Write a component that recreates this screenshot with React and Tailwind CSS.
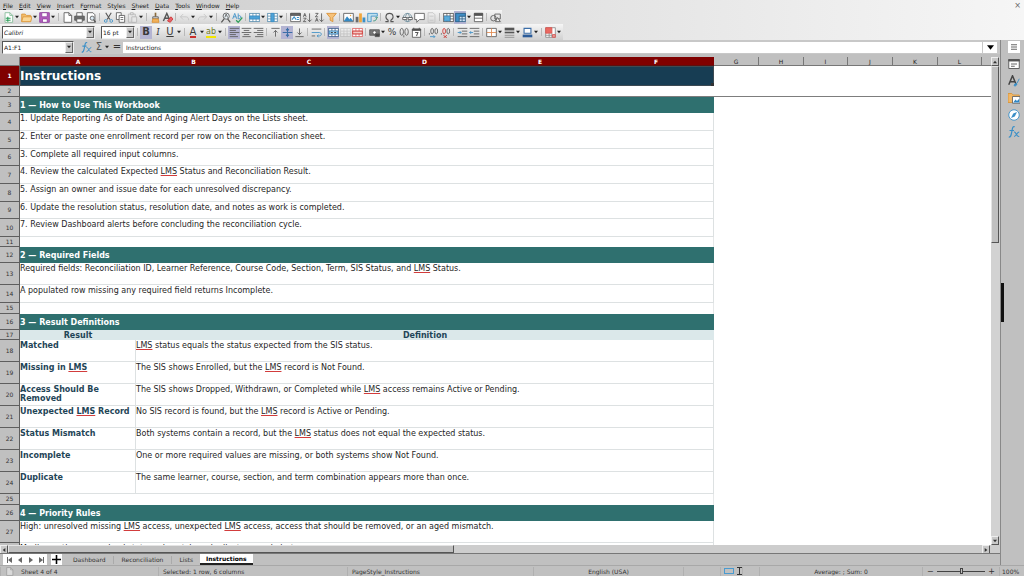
import React from 'react';

const INK = '#565656';
const BLUE = '#3a8fc7';
const RED = '#c9302c';

const Svg = ({ children, className = 'w-[11px] h-[11px]' }) => (
  <svg viewBox="0 0 16 16" className={className} fill="none" stroke={INK} strokeWidth="1.2">
    {children}
  </svg>
);

const Grid = ({ x = 1, y = 2, w = 14, h = 12, color = INK, fill = '#fff' }) => (
  <>
    <rect x={x} y={y} width={w} height={h} fill={fill} stroke={color} />
    <path d={`M${x} ${y + h / 3}h${w}M${x} ${y + (2 * h) / 3}h${w}M${x + w / 3} ${y}v${h}M${x + (2 * w) / 3} ${y}v${h}`} stroke={color} />
  </>
);

const ICONS = {
  new: <><path d="M3 1h7l4 4v10H3z" fill="#fff" stroke="#7fb894" /><path d="M10 1v4h4" stroke="#7fb894" /><path d="M4 9h7M4 12h7M7 7v7" stroke="#2f9e5b" strokeWidth="1.6" /></>,
  open: <><path d="M1 3h5l2 2h6v9H1z" fill="#f3bd6b" stroke="#d9953a" /><path d="M3 7h13l-2 7H1z" fill="#fbd795" stroke="#d9953a" /></>,
  save: <><path d="M1 1h14v14H1z" fill="#b55fc0" stroke="#8d3f9b" /><path d="M4 1h8v6H4zM5 10h7v5H5z" fill="#fff" stroke="#8d3f9b" /></>,
  page: <><path d="M3 1h7l4 4v10H3z" fill="#fff" /><path d="M10 1v4h4" /></>,
  print: <><path d="M4 6V1h8v5" fill="#fff" /><path d="M1 6h14v6H1z" fill="#6b6b6b" /><path d="M4 10h8v5H4z" fill="#fff" /></>,
  preview: <><path d="M2 1h8l3 3v11H2z" fill="#fff" /><circle cx="9" cy="9" r="3" fill="#dceaf4" /><path d="M11 11l3 4" strokeWidth="2" /></>,
  cut: <><path d="M4 1l6 10M12 1L6 11" strokeWidth="1.6" /><circle cx="4" cy="13" r="2" stroke={BLUE} /><circle cx="12" cy="13" r="2" stroke={BLUE} /></>,
  copy: <><path d="M2 1h7v10H2z" fill="#fff" /><path d="M6 5h8v10H6z" fill="#fff" /><path d="M8 8h4M8 11h4" /></>,
  paste: <g stroke="#b5b5b5"><path d="M2 3h10v12H2z" /><path d="M5 1h4v3H5zM7 7h7v8H7z" fill="#e6e6e6" /></g>,
  brush: <><path d="M8 1v6" stroke="#8a6b3c" strokeWidth="2.4" /><path d="M4 7h8v3H4z" fill="#ddd" /><path d="M4 10h8l1 5H3z" fill="#f2b25c" stroke="#d98e2f" /></>,
  clear: <><path d="M2 13L7 2l5 11M4 9h6" strokeWidth="2" /><path d="M8 13l5-6 3 3-4 5z" fill="#e8606a" stroke={RED} /></>,
  undo: <path d="M6 3L2 7l4 4M2 7h8c3 0 4 2 4 5" stroke="#c4c4c4" />,
  redo: <path d="M10 3l4 4-4 4M14 7H6c-3 0-4 2-4 5" stroke="#c4c4c4" />,
  find: <><circle cx="9" cy="6" r="4.5" fill="#eaf2f7" /><path d="M6 10l-4 5M11 10l4 5" strokeWidth="1.8" /><path d="M7 8l2-5 2 5" /></>,
  spell: <><path d="M1 10l3-8 3 8M2 7h4M9 2v8M9 6c4-3 6 4 0 4" stroke={BLUE} /><path d="M6 12l3 3 6-7" stroke="#2f9e5b" strokeWidth="1.8" /></>,
  row: <><Grid color="#5b8fb0" /><path d="M1 6h14v4H1z" fill="#4ca3d8" stroke={BLUE} /></>,
  column: <><Grid color="#5b8fb0" /><path d="M6 2h4v12H6z" fill="#4ca3d8" stroke={BLUE} /></>,
  sort: <><path d="M1 2h14v12H1z" fill="#fff" /><path d="M1 2h14v3H1z" fill="#666" /><path d="M3 11l3-4 3 4M10 8h3M10 11h3" stroke={BLUE} strokeWidth="1.6" /></>,
  sortAsc: <><path d="M2 7l2-5 2 5M3 5h2M2 9h4l-4 5h4" /><path d="M11 2v12M8 11l3 3 3-3" /></>,
  sortDesc: <><path d="M2 2h4L2 7h4M2 14l2-5 2 5M3 12h2" /><path d="M11 2v12M8 11l3 3 3-3" /></>,
  filter: <path d="M1 2h14L10 8v6l-4-2V8z" fill="#f6c27a" stroke="#d98e2f" />,
  image: <><path d="M1 2h14v12H1z" fill="#fff" /><path d="M2 13l4-6 3 4 2-2 3 4z" fill="#2f86c4" stroke={BLUE} /><circle cx="11" cy="5" r="1" fill="#f0a63b" stroke="none" /></>,
  chart: <><path d="M1 7h4v8H1z" fill="#6b6b6b" stroke="none" /><path d="M6 2h4v13H6z" fill="#f0a63b" stroke="none" /><path d="M11 8h4v7h-4z" fill="#3a8fc7" stroke="none" /></>,
  pivot: <><path d="M1 2h14v4H6v8H1z" fill="#bfe0ee" stroke={BLUE} /><path d="M9 13c4 0 5-2 5-5M12 9l2-2 2 2" stroke="#2f8f77" /></>,
  omega: <path d="M2 14h4v-2C1 9 2 2 8 2s7 7 2 10v2h4" strokeWidth="1.5" />,
  link: <><circle cx="8" cy="8" r="6" stroke="#6b8c9c" /><path d="M2 8h12M8 2c-4 4-4 8 0 12 4-4 4-8 0-12" stroke="#6b8c9c" /><path d="M1 8h6v3H1zM9 8h6v3H9z" fill="#fff" /></>,
  comment: <path d="M1 2h14v9H8l-4 4v-4H1z" fill="#fff" />,
  header: <g stroke="#c2c2c2"><path d="M3 1h7l3 3v11H3z" /><path d="M5 6h6M5 12h6" /></g>,
  printArea: <><Grid /><path d="M2 6h8v7H2z" fill="#59abd9" stroke={BLUE} /></>,
  freeze: <><Grid fill="#cfe3f2" color="#33658a" /><path d="M1 2h14v4H6v8H1z" fill="#3f8fc9" stroke="#33658a" /></>,
  split: <><path d="M2 2h12v12H2z" fill="#fff" /><path d="M2 2h12v3H2z" fill="#555" /><path d="M2 9h12" /></>,
  shapes: <><circle cx="5" cy="9" r="4" /><path d="M7 3h8v7H7z" /><path d="M8 14l3-6 4 6z" fill="#eee" /></>,
  top: <path d="M2 2h12M8 5v9M5 8l3-3 3 3" />,
  middle: <path d="M1 8h14M8 1v14M6 3l2 3 2-3M6 13l2-3 2 3" stroke="#3b6ea8" strokeWidth="1.5" />,
  bottom: <path d="M2 14h12M8 2v9M5 8l3 3 3-3" />,
  left: <path d="M1 2h14M1 5h9M1 8h14M1 11h9M1 14h12" />,
  center: <path d="M1 2h14M4 5h8M1 8h14M4 11h8M2 14h12" />,
  right: <path d="M1 2h14M6 5h9M1 8h14M6 11h9M3 14h12" />,
  wrap: <><path d="M1 3h14M1 13h5" /><path d="M1 8h11c4 0 4 5 0 5H9M11 11l-2 2 2 2" stroke={BLUE} /></>,
  merge: <><Grid color="#3c5f8a" /><path d="M2 6h12v4H2z" fill="#bfe0f5" stroke={BLUE} /><path d="M4 8h3M12 8H9" stroke="#222" /></>,
  unmerge: <g opacity=".2"><Grid /></g>,
  cells: <><Grid color="#d66" /><path d="M1 6h14v4H1z" fill="#f6c9c4" stroke={RED} /></>,
  currency: <><path d="M1 4h14v8H1z" fill="#777" /><circle cx="8" cy="8" r="2.5" fill="#fff" /><path d="M9 10h6v4H9z" fill="#444" /></>,
  number: <><ellipse cx="4" cy="7" rx="2.5" ry="5" /><ellipse cx="11" cy="7" rx="2.5" ry="5" /><path d="M7 12v3" /></>,
  date: <><path d="M2 3h12v12H2z" fill="#fff" /><path d="M2 3h12v2H2z" fill="#444" /><path d="M4 1v3M12 1v3M6 8h4l-2 5" strokeWidth="1.5" /></>,
  addDecimal: <><ellipse cx="6" cy="6" rx="2" ry="4" /><ellipse cx="12" cy="6" rx="2" ry="4" /><path d="M2 9v2" /><path d="M3 14h7M8 12l2 2-2 2" stroke={BLUE} /></>,
  delDecimal: <><ellipse cx="6" cy="6" rx="2" ry="4" stroke={RED} /><ellipse cx="12" cy="6" rx="2" ry="4" /><path d="M2 9v2" /><path d="M5 12l5 4M10 12l-5 4" stroke={RED} /></>,
  indent: <><path d="M1 2h14M7 6h8M7 10h8M1 14h14" /><path d="M1 8h5M4 6l2 2-2 2" stroke={BLUE} /></>,
  outdent: <><path d="M1 2h14M7 6h8M7 10h8M1 14h14" /><path d="M1 8h5M3 6L1 8l2 2" stroke={BLUE} /></>,
  borders: <><path d="M1 2h14v12H1z" fill="#fff" /><path d="M8 2v12M1 8h14" stroke="#e0874b" /></>,
  lineStyle: <><path d="M1 3h14" strokeWidth="4" /><path d="M1 8h14" strokeWidth="2.4" /><path d="M1 12h14M1 15h14" stroke="#888" /></>,
  lineColor: <><path d="M3 2h10v7H3z" fill="#fff" stroke="#3b6ea8" strokeWidth="1.6" /><path d="M1 13h14" stroke="#2c5c99" strokeWidth="4" /></>,
  conditional: <><path d="M1 1h14v14H1z" fill="#fff" stroke="#888" /><path d="M1 1h9v8H1z" fill="#ea6a62" stroke="#d9534f" /><path d="M1 12h14M6 9v6M10 9v6" stroke="#888" /><path d="M11 11h4v4h-4z" fill="#e9a09b" stroke="#d9534f" /></>,
};

const LETTERS = {
  bold: <span className="font-bold">B</span>,
  italic: <span className="italic font-serif">I</span>,
  underline: <span className="underline">U</span>,
  fontColor: <span className="border-b-2 border-[#c9302c] leading-[9px]">A</span>,
  highlight: <span className="border-b-2 border-[#f2e600] text-[8px] leading-[9px] text-[#6d7a2c]">ab</span>,
  percent: <span className="text-[9px]">%</span>,
};

// '|' is a separator, a trailing 'v' adds the drop-down arrow, '*' marks a pressed button
const STANDARD = 'new v open v save v | page print preview | cut copy paste v | brush clear | undo v redo v | find spell | row v column v | sort sortAsc sortDesc filter | image chart pivot | omega v link comment header | printArea *freeze v split | shapes';
const FORMATTING = '| *bold italic underline v | fontColor v highlight v | *left center right | top *middle bottom | wrap | *merge unmerge cells | currency v percent number date | addDecimal delDecimal | indent outdent | borders v lineStyle v lineColor v | conditional v';

const Arrow = () => (
  <svg viewBox="0 0 6 6" className="w-[4px] h-[4px]"><path d="M0 1h6L3 5z" fill="#222" /></svg>
);

const Tools = ({ list }) => list.split(' ').map((item, i) => {
  if (item === '|') return <span key={i} className="w-[5px] flex justify-center"><i className="w-px h-[8px] bg-[#b9b9b9]" /></span>;
  if (item === 'v') return <button key={i} aria-label="More" className="w-[6px] h-3 flex items-center justify-center"><Arrow /></button>;
  const pressed = item.startsWith('*');
  const name = item.replace('*', '');
  return (
    <button key={i} aria-label={name} className={`w-3 h-[13px] flex items-center justify-center text-[10px] leading-none text-[#3a3a3a] ${pressed ? 'bg-[#b4b4d2]' : ''}`}>
      {ICONS[name] ? <Svg>{ICONS[name]}</Svg> : LETTERS[name]}
    </button>
  );
});

const Combo = ({ label, value, className }) => (
  <div className={`flex h-[13px] bg-white border border-[#555] border-r-[#eee] border-b-[#eee] ${className}`}>
    <select aria-label={label} className="flex-1 min-w-0 appearance-none pl-px outline-none">
      <option>{value}</option>
    </select>
    <span className="w-[8px] flex items-center justify-center bg-[#c8c8c8] border border-[#eee] border-r-[#666] border-b-[#666] pointer-events-none"><Arrow /></span>
  </div>
);

const MENU = [['', 'F', 'ile'], ['', 'E', 'dit'], ['', 'V', 'iew'], ['', 'I', 'nsert'], ['F', 'o', 'rmat'], ['St', 'y', 'les'], ['', 'S', 'heet'], ['', 'D', 'ata'], ['', 'T', 'ools'], ['', 'W', 'indow'], ['', 'H', 'elp']];

const ROWS = [
  { type: 'title', h: 'h-[20px]', text: 'Instructions' },
  { type: 'frozen', h: 'h-[11px]' },
  { type: 'section', h: 'h-[16px]', text: '1 — How to Use This Workbook' },
  { type: 'text', h: 'h-[18px]', text: '1. Update Reporting As of Date and Aging Alert Days on the Lists sheet.' },
  { type: 'text', h: 'h-[18px]', text: '2. Enter or paste one enrollment record per row on the Reconciliation sheet.' },
  { type: 'text', h: 'h-[17px]', text: '3. Complete all required input columns.' },
  { type: 'text', h: 'h-[18px]', text: '4. Review the calculated Expected LMS Status and Reconciliation Result.' },
  { type: 'text', h: 'h-[18px]', text: '5. Assign an owner and issue date for each unresolved discrepancy.' },
  { type: 'text', h: 'h-[17px]', text: '6. Update the resolution status, resolution date, and notes as work is completed.' },
  { type: 'text', h: 'h-[18px]', text: '7. Review Dashboard alerts before concluding the reconciliation cycle.' },
  { type: 'blank', h: 'h-[10px]' },
  { type: 'section', h: 'h-[16px]', text: '2 — Required Fields' },
  { type: 'text', h: 'h-[22px]', text: 'Required fields: Reconciliation ID, Learner Reference, Course Code, Section, Term, SIS Status, and LMS Status.' },
  { type: 'text', h: 'h-[18px]', text: 'A populated row missing any required field returns Incomplete.' },
  { type: 'blank', h: 'h-[11px]' },
  { type: 'section', h: 'h-[16px]', text: '3 — Result Definitions' },
  { type: 'head', h: 'h-[10px]', term: 'Result', text: 'Definition' },
  { type: 'pair', h: 'h-[22px]', term: 'Matched', text: 'LMS status equals the status expected from the SIS status.' },
  { type: 'pair', h: 'h-[22px]', term: 'Missing in LMS', text: 'The SIS shows Enrolled, but the LMS record is Not Found.' },
  { type: 'pair', h: 'h-[22px]', term: 'Access Should Be Removed', text: 'The SIS shows Dropped, Withdrawn, or Completed while LMS access remains Active or Pending.' },
  { type: 'pair', h: 'h-[22px]', term: 'Unexpected LMS Record', text: 'No SIS record is found, but the LMS record is Active or Pending.' },
  { type: 'pair', h: 'h-[22px]', term: 'Status Mismatch', text: 'Both systems contain a record, but the LMS status does not equal the expected status.' },
  { type: 'pair', h: 'h-[22px]', term: 'Incomplete', text: 'One or more required values are missing, or both systems show Not Found.' },
  { type: 'pair', h: 'h-[22px]', term: 'Duplicate', text: 'The same learner, course, section, and term combination appears more than once.' },
  { type: 'blank', h: 'h-[11px]' },
  { type: 'section', h: 'h-[16px]', text: '4 — Priority Rules' },
  { type: 'text', h: 'h-[22px]', text: 'High: unresolved missing LMS access, unexpected LMS access, access that should be removed, or an aged mismatch.' },
  { type: 'text', h: 'h-[22px]', text: 'Medium: other unresolved status mismatch or duplicate record alerts.' },
];

// LMS is not in the dictionary, so the spell checker marks it
const Spell = ({ text }) => text.split(/(LMS)/).map((part, i) => (
  part === 'LMS' ? <span key={i} className="underline decoration-[#d23c3c] decoration-1 underline-offset-1">LMS</span> : part
));

const CELL = {
  title: 'relative bg-[#173d53] text-white text-[12px] leading-[16px] font-bold align-middle outline outline-1 -outline-offset-1 outline-[#3d4a52]',
  section: 'bg-[#2f706f] text-white font-bold align-middle',
  text: 'align-top pt-px border-b border-r border-[#dde1e2]',
  blank: 'border-r border-[#e6e8e9]',
  frozen: 'border-b border-[#7d7d7d]',
};

const Row = ({ row, n }) => (
  <tr className={row.h}>
    <th scope="row" className={`text-[6px] leading-[8px] align-middle border-b border-r border-[#5e5e5e] ${n === 1 ? 'bg-[#800000] text-white' : 'bg-[#c0c0c0] text-[#333] font-normal'}`}>{n}</th>
    {row.type === 'pair' && (
      <>
        <td className="align-top pt-px border-b border-r border-[#dde1e2] font-bold text-[#1f4557]"><Spell text={row.term} /></td>
        <td colSpan={5} className="align-top pt-px border-b border-r border-[#dde1e2]"><Spell text={row.text} /></td>
      </>
    )}
    {row.type === 'head' && (
      <>
        <td className="bg-[#dbe8ea] text-center font-bold text-[#1f4557]">{row.term}</td>
        <td colSpan={5} className="bg-[#dbe8ea] text-center font-bold text-[#1f4557]">{row.text}</td>
      </>
    )}
    {CELL[row.type] && (
      <td colSpan={6} className={CELL[row.type]}>
        {row.text && <Spell text={row.text} />}
        {row.type === 'title' && <i className="absolute right-0 bottom-0 w-[3px] h-[3px] bg-[#333]" />}
      </td>
    )}
    <td colSpan={7} className={row.type === 'frozen' ? 'border-b border-[#7d7d7d]' : ''} />
  </tr>
);

const COLS = ['w-[20px]', 'w-[116px]', 'w-[115px]', 'w-[116px]', 'w-[115px]', 'w-[116px]', 'w-[116px]', 'w-[45px]', 'w-[45px]', 'w-[44px]', 'w-[45px]', 'w-[45px]', 'w-[44px]', ''];

const Sheet = () => (
  <div className="flex-1 min-w-0 overflow-hidden bg-white">
    <table className="w-full table-fixed border-separate border-spacing-0 text-[8px] leading-[9px] text-[#262626]">
      <colgroup>{COLS.map((w, i) => <col key={i} className={w} />)}</colgroup>
      <thead>
        <tr className="h-[9px] text-[6px] leading-[7px]">
          <td className="bg-[#c0c0c0] border-b border-r border-[#777]" />
          {[...'ABCDEFGHIJKL'].map((c, i) => (
            <th key={c} scope="col" className={i < 6 ? 'bg-[#800000] text-white border-b border-[#5a1010]' : 'bg-[#c0c0c0] font-normal text-[#222] border-b border-r border-[#777]'}>{c}</th>
          ))}
          <td className="bg-[#c0c0c0] border-b border-[#777]" />
        </tr>
      </thead>
      <tbody>{ROWS.map((row, i) => <Row key={i} row={row} n={i + 1} />)}</tbody>
    </table>
  </div>
);

const ScrollButton = ({ d, label }) => (
  <button aria-label={label} className="w-[8px] h-[9px] shrink-0 flex items-center justify-center bg-[#c8c8c8] border border-[#eee] border-r-[#555] border-b-[#555]">
    <svg viewBox="0 0 6 6" className="w-[4px] h-[4px]"><path d={d} fill="#333" /></svg>
  </button>
);

const SIDEBAR = {
  Settings: <><path d="M0 0h16v16H0z" fill="#fff" stroke="none" /><path d="M4 5h8M4 8h8M4 11h8" stroke="#555" /></>,
  Properties: <><path d="M1 2h14v12H1z" fill="#fff" stroke="#555" /><path d="M1 2h14v2H1z" fill="#555" /><path d="M4 8h8M4 11h5" stroke="#555" /></>,
  Styles: <><path d="M1 13L6 1l5 12M3 9h6" stroke="#444" strokeWidth="2" /><path d="M8 14c1-3 3-3 4-2-1 3-3 3-4 2zM12 11l3-6" fill="#3a8fc7" stroke="#3a8fc7" /></>,
  Gallery: <><path d="M0 2h5l2 2h8v10H0z" fill="#f2b765" stroke="#d9953a" /><path d="M6 6h10v9H6z" fill="#fff" stroke="#666" /><path d="M7 14l3-4 2 2 3-3v5z" fill="#2f86c4" stroke="none" /></>,
  Navigator: <><circle cx="8" cy="8" r="7" fill="#fff" stroke="#3a8fc7" /><path d="M12 4L9 10l-5 2 3-6z" fill="#3a8fc7" stroke="none" /></>,
  Functions: <><path d="M9 1C6 0 6 3 5 8s-1 7-4 7M2 6h6" stroke="#3a8fc7" strokeWidth="1.6" /><path d="M8 8c3-1 3 7 7 6M15 8c-3 0-4 6-7 6" stroke="#3a8fc7" strokeWidth="1.4" /></>,
};

const Sidebar = () => (
  <aside className="relative w-6 shrink-0 flex flex-col items-center gap-[5px] pt-px pl-[2px] border-l border-[#888] bg-[#c0c0c0]">
    {Object.entries(SIDEBAR).map(([name, icon]) => (
      <button key={name} aria-label={name} className="w-3 h-3"><Svg className="w-3 h-3">{icon}</Svg></button>
    ))}
    <button aria-label="Hide sidebar" className="absolute left-0 top-[243px] w-[3px] h-[39px] bg-[#111]" />
  </aside>
);

const FormulaBar = () => (
  <div className="flex items-center h-[14px] bg-[#c8c8c8] text-[6px] mb-[3px]">
    <div className="flex h-[13px] w-[72px] ml-[2px] bg-white border border-[#555] border-r-[#eee] border-b-[#eee]">
      <input aria-label="Name box" defaultValue="A1:F1" className="flex-1 min-w-0 pl-px outline-none" />
      <button aria-label="Named ranges" className="w-[8px] flex items-center justify-center bg-[#c8c8c8] border border-[#eee] border-r-[#666] border-b-[#666]"><Arrow /></button>
    </div>
    <button aria-label="Function wizard" className="ml-[7px] w-3"><Svg>{SIDEBAR.Functions}</Svg></button>
    <button aria-label="Sum" className="w-3 text-[10px] leading-none text-[#555]">Σ</button>
    <button aria-label="More" className="w-[6px]"><Arrow /></button>
    <button aria-label="Formula" className="w-3 text-[10px] leading-none text-[#333]">=</button>
    <input aria-label="Formula input" defaultValue="Instructions" className="flex-1 min-w-0 h-[11px] pl-[3px] bg-white outline-none" />
    <button aria-label="Expand formula bar" className="w-[14px] h-[11px] ml-px mr-[3px] bg-white flex items-center justify-center">
      <svg viewBox="0 0 6 6" className="w-[7px] h-[7px]"><path d="M0 1h6L3 5z" fill="#000" /></svg>
    </button>
  </div>
);

const NAV = [['First', 'M1 0h1v6H1zM6 0v6L2 3z'], ['Previous', 'M5 0v6L1 3z'], ['Next', 'M1 0v6l4-3z'], ['Last', 'M0 0v6l4-3zM4 0h1v6H4z']];

const Tabs = () => (
  <nav className="flex items-center h-[12px] pl-[3px] border-t border-[#777] bg-[#c0c0c0] text-[6px] text-[#333]">
    {NAV.map(([name, d]) => (
      <button key={name} aria-label={name} className="w-[11px] h-[11px] flex items-center justify-center bg-white">
        <svg viewBox="0 0 6 6" className="w-[6px] h-[6px]"><path d={d} fill="#666" /></svg>
      </button>
    ))}
    <button aria-label="Add sheet" className="mx-[4px] w-[11px] h-[11px] bg-white flex items-center justify-center">
      <svg viewBox="0 0 8 8" className="w-[9px] h-[9px]"><path d="M4 0v8M0 4h8" stroke="#000" strokeWidth="1.4" /></svg>
    </button>
    <button className="px-[7px] border-r border-[#aaa] leading-[8px]">Dashboard</button>
    <button className="px-[8px] border-r border-[#aaa] leading-[8px]">Reconciliation</button>
    <button className="px-[7px] leading-[8px]">Lists</button>
    <button className="h-[11px] px-[6px] bg-white border-b-2 border-[#222] font-bold text-black leading-[8px]">Instructions</button>
  </nav>
);

const StatusBar = () => (
  <footer className="grid grid-cols-[158fr_189fr_186fr_150fr_37fr_22fr_17fr_163fr_77fr_25fr] h-[11px] items-center border-t border-[#a8a8a8] bg-[#c0c0c0] text-[6px] leading-[9px] text-[#333] *:min-w-0 *:h-[9px] *:border-l *:border-[#b0b0b0] whitespace-nowrap">
    <span className="flex items-center gap-[7px] pl-[4px]"><Svg className="w-[9px] h-[9px] opacity-40">{ICONS.page}</Svg>Sheet 4 of 4</span>
    <span className="pl-[4px]">Selected: 1 row, 6 columns</span>
    <span className="pl-[4px]">PageStyle_Instructions</span>
    <span className="text-center">English (USA)</span>
    <span />
    <span className="flex items-center gap-[3px] pl-[3px]">
      <i className="w-[10px] h-[6px] border border-[#4a9bd0]" />
      <svg viewBox="0 0 5 8" className="w-[5px] h-[8px]" fill="none" stroke="#333"><path d="M0 .5h5M0 7.5h5M2.5 0v8" /></svg>
    </span>
    <span />
    <span className="text-center">Average: ; Sum: 0</span>
    <span className="flex items-center gap-[3px] px-[4px]">
      <button aria-label="Zoom out" className="text-[8px]">−</button>
      <input type="range" aria-label="Zoom" className="flex-1 w-0 min-w-0 h-px appearance-none bg-[#444] [&::-webkit-slider-thumb]:appearance-none [&::-webkit-slider-thumb]:w-[3px] [&::-webkit-slider-thumb]:h-[6px] [&::-webkit-slider-thumb]:bg-[#c0c0c0] [&::-webkit-slider-thumb]:border [&::-webkit-slider-thumb]:border-[#444]" />
      <button aria-label="Zoom in" className="text-[8px]">+</button>
    </span>
    <span className="pl-[2px]">100%</span>
  </footer>
);

export default function App() {
  return (
    <div className="h-screen flex flex-col overflow-hidden bg-[#c0c0c0] font-['DejaVu_Sans',sans-serif] text-[#222]">
      <header className="h-10 shrink-0 bg-linear-to-r from-[#c9c9c9] via-[#e0e0e0] to-[#f6f6f6]">
        <div className="h-[10px] flex items-center gap-[6px] px-[3px] text-[6px] leading-[9px]">
          {MENU.map(([a, b, c]) => <button key={a + b + c}>{a}<u>{b}</u>{c}</button>)}
          <button aria-label="Close document" className="ml-auto text-[8px] text-[#666]">×</button>
        </div>
        <div className="h-[14px] w-fit flex items-center pl-[2px] pr-px bg-linear-to-b from-[#f6f6f6] to-[#d4d4d4]">
          <Tools list={STANDARD} />
        </div>
        <div className="h-[16px] w-fit flex items-center pl-[2px] pr-px text-[6px] bg-linear-to-b from-[#f6f6f6] to-[#d0d0d0]">
          <Combo label="Font name" value="Calibri" className="w-[93px] mr-[6px] italic" />
          <Combo label="Font size" value="16 pt" className="w-[34px]" />
          <Tools list={FORMATTING} />
        </div>
      </header>

      <main className="flex-1 min-h-0 flex">
        <div className="flex-1 min-w-0 flex flex-col">
          <FormulaBar />
          <div className="flex-1 min-h-0 flex">
            <Sheet />
            <div className="w-[9px] shrink-0 flex flex-col bg-[#d2d2d2]">
              <ScrollButton label="Scroll up" d="M0 5h6L3 1z" />
              <div className="basis-[177px] w-[8px] bg-[#c0c0c0] border border-[#e4e4e4] border-r-[#555] border-b-[#555]" />
              <div className="flex-1" />
              <ScrollButton label="Scroll down" d="M0 1h6L3 5z" />
            </div>
          </div>
          <div className="h-[8px] shrink-0 flex bg-[#cdcdcd] pr-[10px]">
            <ScrollButton label="Scroll left" d="M5 0v6L1 3z" />
            <div className="w-[45%] bg-[#c0c0c0] border border-[#e4e4e4] border-r-[#555] border-b-[#555]" />
            <div className="flex-1" />
            <ScrollButton label="Scroll right" d="M1 0v6l4-3z" />
          </div>
          <Tabs />
        </div>
        <Sidebar />
      </main>

      <StatusBar />
    </div>
  );
}
